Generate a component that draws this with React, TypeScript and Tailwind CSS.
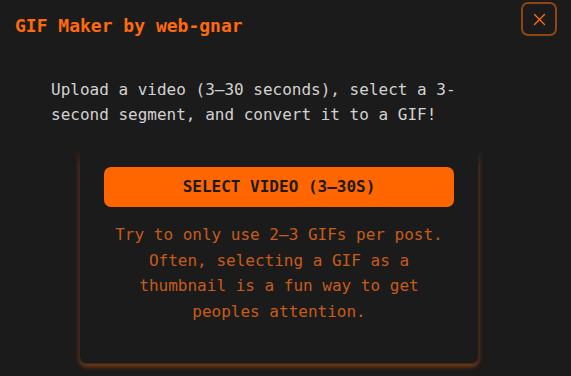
export default function App() {
  return (
    <div className="min-h-screen w-full bg-[#1b1b1b] font-['DejaVu_Sans_Mono',monospace] overflow-hidden">
      <div className="flex items-start justify-between pl-[15px] pr-[14px] pt-[2px]">
        <h1 className="mt-[13px] text-[18px] leading-[22px] font-bold text-[#ff6a0f]">
          GIF Maker by web-gnar
        </h1>
        <button className="w-[36px] h-[34px] rounded-[7px] border-2 border-[#8f4614] flex items-center justify-center">
          <svg width="15" height="15" viewBox="0 0 24 24" fill="none" stroke="#ff6a0f" strokeWidth="2.2" strokeLinecap="round">
            <path d="M4 4l16 16M20 4L4 20" />
          </svg>
        </button>
      </div>

      <div className="ml-[51px] w-[456px] mt-[40px]">
        <p className="text-[16px] leading-[25px] text-[#d2d2d2]">
          Upload a video (3–30 seconds), select a 3-second segment, and convert it to a GIF!
        </p>

        <div className="relative mt-[15px] mx-auto w-[400px] h-[222px] rounded-[8px] border border-[#3a261b] shadow-[0_3px_4px_rgba(255,102,0,0.4)] px-6 pt-6">
          {/* fade the top edge of the card into the page */}
          <div className="absolute -left-[3px] -right-[3px] -top-[2px] h-[26px] bg-gradient-to-b from-[#1b1b1b] from-30% to-transparent pointer-events-none" />
          <button className="w-full h-[40px] rounded-[7px] bg-[#ff6600] text-[16px] font-bold text-[#1b1b1b]">
            SELECT VIDEO (3–30S)
          </button>
          <p className="mt-[15px] text-center text-[16px] leading-[25.6px] text-[#c75b1c]">
            Try to only use 2–3 GIFs per post. Often, selecting a GIF as a thumbnail is a fun way to get peoples attention.
          </p>
        </div>
      </div>
    </div>
  );
}
